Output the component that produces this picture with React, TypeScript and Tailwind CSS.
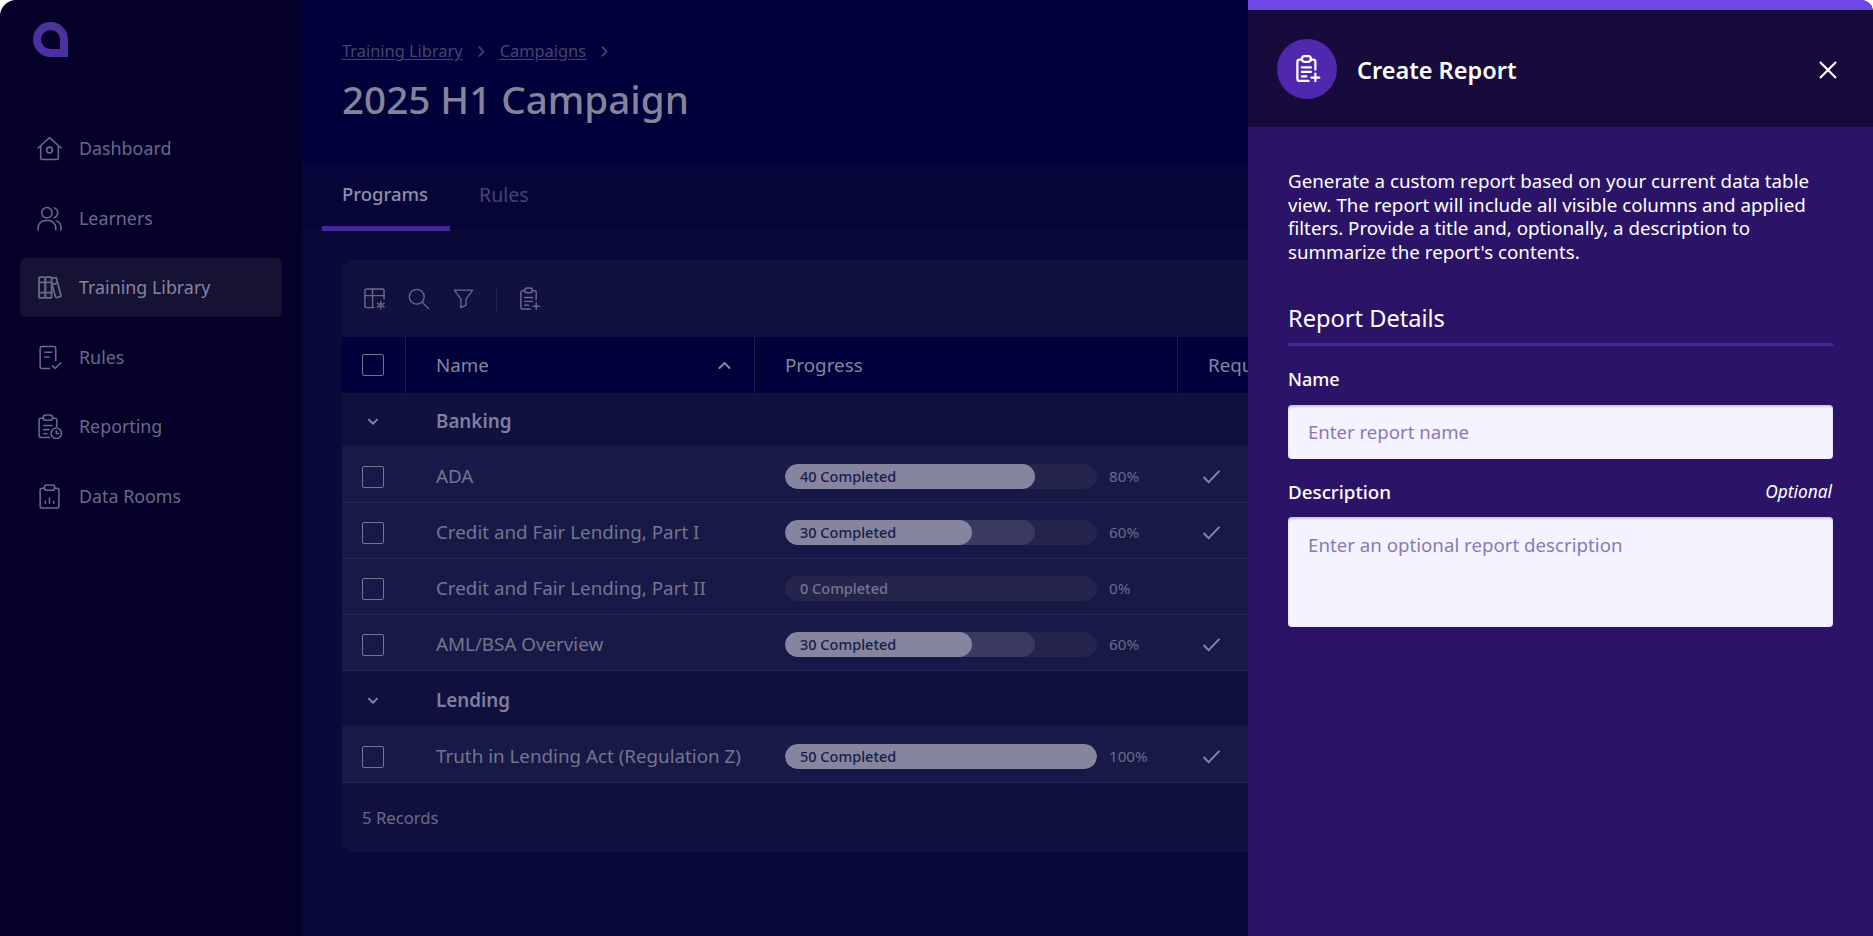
import type { ReactNode } from "react";

const font = { fontFamily: '"Noto Sans", Roboto, sans-serif' };

type IconProps = { className?: string; strokeWidth?: number };

const Svg = ({ className, strokeWidth = 1.5, children }: IconProps & { children: ReactNode }) => (
  <svg
    viewBox="0 0 24 24"
    fill="none"
    stroke="currentColor"
    strokeWidth={strokeWidth}
    strokeLinecap="round"
    strokeLinejoin="round"
    className={className}
  >
    {children}
  </svg>
);

const HomeIcon = (p: IconProps) => (
  <Svg {...p}>
    <path d="M1 11.5 12 1.5l11 10" />
    <path d="M3.5 10v11a1.5 1.5 0 0 0 1.5 1.5h14a1.5 1.5 0 0 0 1.5-1.5V10" />
    <circle cx="12" cy="13.5" r="2.8" />
  </Svg>
);

const UsersIcon = (p: IconProps) => (
  <Svg {...p}>
    <circle cx="9.5" cy="6.5" r="5" />
    <path d="M16.5 1.8a5 5 0 0 1 0 9.4" />
    <path d="M1 23v-2a7 7 0 0 1 7-7h3a7 7 0 0 1 7 7v2" />
    <path d="M19 14.5a6.5 6.5 0 0 1 4 6v2.5" />
  </Svg>
);

const BooksIcon = (p: IconProps) => (
  <Svg {...p} strokeWidth={1.7}>
    <rect x="2" y="2" width="6" height="20" rx="1" />
    <rect x="8" y="2" width="6" height="20" rx="1" />
    <path d="M14 3.5 17.5 2.5a1 1 0 0 1 1.2.7l4.2 16.4a1 1 0 0 1-.7 1.2l-3.2.9a1 1 0 0 1-1.2-.7L14 8" />
    <path d="M2 7h6M8 7h6M2 17h12M15 9l4.5-1.2" />
  </Svg>
);

const RulesIcon = (p: IconProps) => (
  <Svg {...p}>
    <path d="M12 22.5H5a2 2 0 0 1-2-2v-17a2 2 0 0 1 2-2h11a2 2 0 0 1 2 2V15" />
    <path d="M7.5 7h6.5M7.5 11.5h4" />
    <path d="m15 20 2.5 2.5L23 17" />
  </Svg>
);

const ReportingIcon = (p: IconProps) => (
  <Svg {...p}>
    <path d="M6 4H4a2 2 0 0 0-2 2v14.5a2 2 0 0 0 2 2h8" />
    <path d="M15 4h2a2 2 0 0 1 2 2v6" />
    <rect x="6" y="1" width="9" height="5" rx="2.4" />
    <path d="M6.5 11h8M6.5 15h5M6.5 19h3" />
    <circle cx="18.5" cy="18.5" r="5" />
    <path d="M18.5 16v2.7h2.4" />
  </Svg>
);

const DataRoomIcon = (p: IconProps) => (
  <Svg {...p}>
    <path d="M7 4H5a2 2 0 0 0-2 2v15a2 2 0 0 0 2 2h14a2 2 0 0 0 2-2V6a2 2 0 0 0-2-2h-2" />
    <rect x="7" y="1" width="10" height="5" rx="2.5" />
    <path d="M8 18.5v-2M12 18.5v-5M16 18.5v-2" />
  </Svg>
);

const TableSettingsIcon = (p: IconProps) => (
  <Svg {...p}>
    <path d="M11.5 21.5H4a2 2 0 0 1-2-2V4a2 2 0 0 1 2-2h16a2 2 0 0 1 2 2v8.5" />
    <path d="M2 9h20M10 2v19.5" />
    <circle cx="18.5" cy="19" r="1.5" />
    <path d="M18.5 15v1.5M18.5 21.5V23M15 17l1.3.8M20.7 20.2l1.3.8M15 21l1.3-.8M20.7 17.8 22 17" />
  </Svg>
);

const SearchIcon = (p: IconProps) => (
  <Svg {...p}>
    <circle cx="10" cy="10" r="8.5" />
    <path d="m16.5 16.5 7 7" />
  </Svg>
);

const FilterIcon = (p: IconProps) => (
  <Svg {...p}>
    <path d="M1.5 2.5h21L15 12.5v7l-6 3v-10z" />
  </Svg>
);

const ClipboardPlusIcon = (p: IconProps) => (
  <Svg {...p}>
    <path d="M7 4H5a2 2 0 0 0-2 2v15a2 2 0 0 0 2 2h8" />
    <path d="M15 4h2a2 2 0 0 1 2 2v7" />
    <rect x="7" y="1" width="8" height="5" rx="2.4" />
    <path d="M7 11h8M7 15h8M7 19h4M19 16.5v7M15.5 20h7" />
  </Svg>
);

const Chevron = ({ className, d }: { className?: string; d: string }) => (
  <svg viewBox="0 0 12 12" fill="none" stroke="currentColor" strokeWidth="1.6" strokeLinecap="round" strokeLinejoin="round" className={className}>
    <path d={d} />
  </svg>
);

const navItems = [
  { label: "Dashboard", Icon: HomeIcon },
  { label: "Learners", Icon: UsersIcon },
  { label: "Training Library", Icon: BooksIcon, active: true },
  { label: "Rules", Icon: RulesIcon },
  { label: "Reporting", Icon: ReportingIcon },
  { label: "Data Rooms", Icon: DataRoomIcon },
];

const Checkbox = () => <div className="h-[22px] w-[22px] rounded-[2px] border-[1.5px] border-[#74748f]" />;

const Logo = () => (
  <svg viewBox="0 0 35 35" className="h-[35px] w-[35px]">
    <defs>
      <linearGradient id="logoFill" x1="0" y1="0" x2="0" y2="1">
        <stop offset="0" stopColor="#4a3598" />
        <stop offset="1" stopColor="#4b2fa6" />
      </linearGradient>
    </defs>
    <path
      fillRule="evenodd"
      fill="url(#logoFill)"
      d="M17.5 0A17.5 17.5 0 0 1 35 17.5V35H17.5a17.5 17.5 0 0 1 0-35zM17.5 8a9.5 9.5 0 0 0 0 19H27V17.5A9.5 9.5 0 0 0 17.5 8z"
    />
  </svg>
);

const Sidebar = () => (
  <aside className="flex h-full w-[302px] shrink-0 flex-col rounded-tl-[16px] bg-[#050029]">
    <div className="h-[119px] pt-[22px] pl-[33px]">
      <Logo />
    </div>
    <nav className="flex flex-col gap-[10.5px] px-5">
      {navItems.map(({ label, Icon, active }) => (
        <div
          key={label}
          className={`flex h-[59px] items-center gap-[17px] rounded-md pl-[17px] text-[17.85px] ${
            active ? "bg-[#151233] text-[#85849e]" : "text-[#6a6987]"
          }`}
        >
          <Icon className="h-[25px] w-[25px] text-[#6a6987]" />
          <span>{label}</span>
        </div>
      ))}
    </nav>
  </aside>
);

const columns = { check: "w-[64px]", name: "w-[349px]", progress: "w-[423px]" };

type Program = { name: string; completed: number; percent: number; required: boolean; cap?: number };

const ProgressBar = ({ completed, percent, cap }: Program) => (
  <div className="flex items-center pl-[30px]">
    <div className="relative h-[25px] w-[312px] overflow-hidden rounded-full bg-[#25244d]">
      {cap ? <div className="absolute inset-y-0 left-0 rounded-full bg-[#3a3a60]" style={{ width: `${cap}%` }} /> : null}
      {completed > 0 ? <div className="absolute inset-y-0 left-0 rounded-full bg-[#85859f]" style={{ width: `${percent}%` }} /> : null}
      <span className={`absolute inset-y-0 left-[15px] flex items-center text-[14.5px] font-medium ${completed > 0 ? "text-[#1b1b48]" : "text-[#74748f]"}`}>
        {completed} Completed
      </span>
    </div>
    <span className="ml-3 text-[15.2px] text-[#6a6a88]">{percent}%</span>
  </div>
);

const Row = ({ program }: { program: Program }) => (
  <div className="flex h-[56px] items-center border-b border-[#23244f] bg-[#171a47] pt-[4px]">
    <div className={`${columns.check} flex shrink-0 justify-center pr-[2px]`}>
      <Checkbox />
    </div>
    <div className={`${columns.name} shrink-0 pl-[30px] text-[18.8px] text-[#74748f]`}>{program.name}</div>
    <div className={`${columns.progress} shrink-0`}>
      <ProgressBar {...program} />
    </div>
    <div className="pl-[24px]">
      {program.required ? (
        <svg viewBox="0 0 20 16" fill="none" stroke="#85859f" strokeWidth="2.2" className="h-[15px] w-[19px]">
          <path d="m1.5 8.5 5.5 5.5L18.5 2" />
        </svg>
      ) : null}
    </div>
  </div>
);

const GroupRow = ({ name, height }: { name: string; height: string }) => (
  <div className={`flex ${height} items-center border-b border-[#1a1b49] pt-[4px]`}>
    <div className={`${columns.check} flex shrink-0 justify-center pr-[2px]`}>
      <Chevron d="m2.5 4 3.5 3.5L9.5 4" className="h-[14px] w-[14px] text-[#85859f]" />
    </div>
    <div className="pl-[30px] text-[18.8px] font-semibold text-[#7f7f9c]">{name}</div>
  </div>
);

const banking: Program[] = [
  { name: "ADA", completed: 40, percent: 80, required: true },
  { name: "Credit and Fair Lending, Part I", completed: 30, percent: 60, required: true, cap: 80 },
  { name: "Credit and Fair Lending, Part II", completed: 0, percent: 0, required: false },
  { name: "AML/BSA Overview", completed: 30, percent: 60, required: true, cap: 80 },
];

const Main = () => (
  <main className="flex h-full min-w-0 flex-1 flex-col overflow-hidden bg-[#0a0a3a]">
    <header className="h-[162px] shrink-0 bg-[#00003a] pt-[40px] pl-[40px]">
      <div className="flex items-center text-[16.4px] leading-[22px] text-[#45456d]">
        <span className="underline underline-offset-2">Training Library</span>
        <Chevron d="m4 2 4 4-4 4" className="mx-[12px] h-[13px] w-[13px]" />
        <span className="underline underline-offset-2">Campaigns</span>
        <Chevron d="m4 2 4 4-4 4" className="mx-[12px] h-[13px] w-[13px]" />
      </div>
      <h1 className="mt-[12px] text-[38.6px] leading-[50px] font-medium text-[#84849c]">2025 H1 Campaign</h1>
    </header>
    <div className="flex h-[68px] shrink-0 bg-[#05053a] pl-[20px]">
      <div className="flex h-[69px] w-[128px] items-center justify-center border-b-[5px] border-[#44259c] pr-[2px] text-[18.5px] font-medium text-[#8f8fa8]">
        Programs
      </div>
      <div className="ml-[29px] flex items-center pb-[2px] text-[19.5px] text-[#45456d]">Rules</div>
    </div>
    <div className="pt-[30px] pl-[40px]">
      <section className="h-[592px] w-[1500px] overflow-hidden rounded-xl bg-[#10113f]">
        <div className="flex h-[77px] items-center pl-[21px] text-[#6a6a88]">
          <TableSettingsIcon className="h-[23px] w-[23px]" />
          <SearchIcon className="ml-[22px] h-[21px] w-[21px]" />
          <FilterIcon className="ml-[24px] h-[21px] w-[21px]" />
          <div className="mr-[21px] ml-[22px] h-[24px] w-px bg-[#22234f]" />
          <ClipboardPlusIcon className="h-[23px] w-[23px]" />
        </div>
        <div className="flex h-[56px] items-center bg-[#00003a] text-[18.8px] text-[#85859f]">
          <div className={`${columns.check} flex h-full shrink-0 items-center justify-center border-r border-[#1c1c4e] pr-[2px]`}>
            <Checkbox />
          </div>
          <div className={`${columns.name} flex h-full shrink-0 items-center justify-between border-r border-[#1c1c4e] pr-[22px] pl-[30px]`}>
            Name
            <Chevron d="m2 8 4-4 4 4" className="h-[15px] w-[15px] text-[#85859f]" />
          </div>
          <div className={`${columns.progress} flex h-full shrink-0 items-center border-r border-[#1c1c4e] pl-[30px]`}>Progress</div>
          <div className="pl-[30px]">Required</div>
        </div>
        <GroupRow name="Banking" height="h-[54px]" />
        {banking.map(program => (
          <Row key={program.name} program={program} />
        ))}
        <GroupRow name="Lending" height="h-[56px]" />
        <Row program={{ name: "Truth in Lending Act (Regulation Z)", completed: 50, percent: 100, required: true }} />
        <div className="flex h-[70px] items-center pl-[20px] text-[16.7px] text-[#6a6a88]">5 Records</div>
      </section>
    </div>
  </main>
);

const ReportPanel = () => (
  <aside className="flex h-full w-[625px] shrink-0 flex-col overflow-hidden rounded-tr-[12px] bg-[#2b1468]">
    <div className="h-[10px] shrink-0 bg-[#7048e8]" />
    <div className="flex h-[117px] shrink-0 items-center bg-[#170b3b] pr-[36px] pl-[29px]">
      <div className="flex h-[60px] w-[60px] items-center justify-center rounded-full bg-[#5028ae] text-white">
        <ClipboardPlusIcon className="h-[27px] w-[27px]" strokeWidth={2} />
      </div>
      <h2 className="ml-[20px] flex-1 pt-[4px] text-[23.5px] font-semibold text-white">Create Report</h2>
      <svg viewBox="0 0 18 18" fill="none" stroke="white" strokeWidth="2.2" className="mt-[2px] h-[18px] w-[18px]">
        <path d="m1 1 16 16M17 1 1 17" />
      </svg>
    </div>
    <div className="flex flex-col px-[40px] pt-[42px]">
      <p className="text-[18.75px] leading-[23.6px] text-white">
        Generate a custom report based on your current data table view. The report will include all visible columns and applied filters. Provide a title and, optionally, a description to summarize the report's contents.
      </p>
      <h3 className="mt-[38px] border-b-[3px] border-[#46269a] pb-[8px] text-[23.6px] leading-[34px] text-white">Report Details</h3>
      <label className="mt-[21px] text-[18px] leading-[24px] font-medium text-white">Name</label>
      <input
        placeholder="Enter report name"
        className="mt-[14px] h-[54px] w-full rounded-[4px] bg-[#f5f3ff] px-[20px] pb-[2px] text-[18.6px] shadow-[inset_0_2px_2px_rgba(43,20,104,0.2)] outline-none placeholder:text-[#8a78b5]"
      />
      <div className="mt-[21px] flex items-center justify-between leading-[24px]">
        <label className="text-[18.8px] font-medium text-white">Description</label>
        <span className="pr-[1px] text-[17.3px] text-white italic">Optional</span>
      </div>
      <textarea
        placeholder="Enter an optional report description"
        className="mt-[13px] h-[110px] w-full resize-none rounded-[4px] bg-[#f5f3ff] px-[20px] py-[14px] text-[18.7px] shadow-[inset_0_2px_2px_rgba(43,20,104,0.2)] outline-none placeholder:text-[#8a78b5]"
      />
    </div>
  </aside>
);

const App = () => (
  <div className="flex h-screen w-full overflow-hidden bg-white" style={font}>
    <Sidebar />
    <Main />
    <ReportPanel />
  </div>
);

export default App;
